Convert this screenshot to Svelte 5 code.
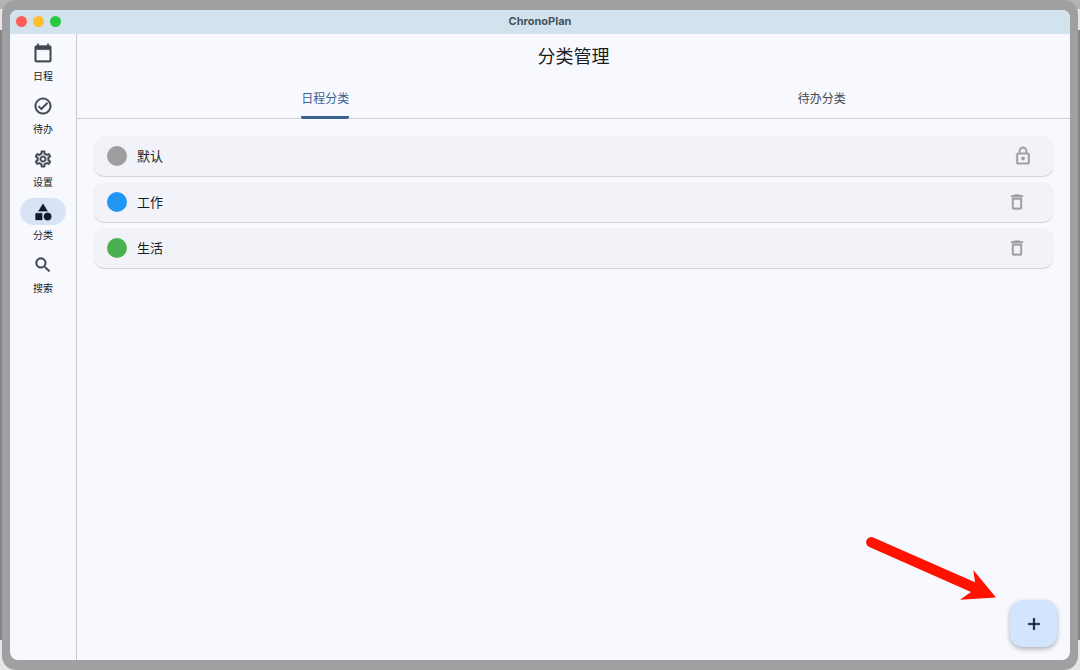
<script>
  const nav = [
    { label: '日程', icon: 'M20 3h-1V1h-2v2H7V1H5v2H4c-1.1 0-2 .9-2 2v16c0 1.1.9 2 2 2h16c1.1 0 2-.9 2-2V5c0-1.1-.9-2-2-2zm0 18H4V8h16v13z' },
    { label: '待办', icon: 'M12 2C6.48 2 2 6.48 2 12s4.48 10 10 10 10-4.48 10-10S17.52 2 12 2zm0 18c-4.41 0-8-3.59-8-8s3.59-8 8-8 8 3.59 8 8-3.59 8-8 8zm4.59-12.42L10 14.17l-2.59-2.58L6 13l4 4 8-8z' },
    { label: '设置', icon: 'M19.43 12.98c.04-.32.07-.64.07-.98 0-.34-.03-.66-.07-.98l2.11-1.65c.19-.15.24-.42.12-.64l-2-3.46c-.09-.16-.26-.25-.44-.25-.06 0-.12.01-.17.03l-2.49 1c-.52-.4-1.08-.73-1.69-.98l-.38-2.65C14.46 2.18 14.25 2 14 2h-4c-.25 0-.46.18-.49.42l-.38 2.65c-.61.25-1.17.59-1.69.98l-2.49-1c-.06-.02-.12-.03-.18-.03-.17 0-.34.09-.43.25l-2 3.46c-.13.22-.07.49.12.64l2.11 1.65c-.04.32-.07.65-.07.98 0 .33.03.66.07.98l-2.11 1.65c-.19.15-.24.42-.12.64l2 3.46c.09.16.26.25.44.25.06 0 .12-.01.17-.03l2.49-1c.52.4 1.08.73 1.69.98l.38 2.65c.03.24.24.42.49.42h4c.25 0 .46-.18.49-.42l.38-2.65c.61-.25 1.17-.59 1.69-.98l2.49 1c.06.02.12.03.18.03.17 0 .34-.09.43-.25l2-3.46c.12-.22.07-.49-.12-.64l-2.11-1.65zm-1.98-1.71c.04.31.05.52.05.73 0 .21-.02.43-.05.73l-.14 1.13.89.7 1.08.84-.7 1.21-1.27-.51-1.04-.42-.9.68c-.43.32-.84.56-1.25.73l-1.06.43-.16 1.13-.2 1.35h-1.4l-.19-1.35-.16-1.13-1.06-.43c-.43-.18-.83-.41-1.23-.71l-.91-.7-1.06.43-1.27.51-.7-1.21 1.08-.84.89-.7-.14-1.13c-.03-.31-.05-.54-.05-.74s.02-.43.05-.73l.14-1.13-.89-.7-1.08-.84.7-1.21 1.27.51 1.04.42.9-.68c.43-.32.84-.56 1.25-.73l1.06-.43.16-1.13.2-1.35h1.39l.19 1.35.16 1.13 1.06.43c.43.18.83.41 1.23.71l.91.7 1.06-.43 1.27-.51.7 1.21-1.07.85-.89.7.14 1.13zM12 8c-2.21 0-4 1.79-4 4s1.79 4 4 4 4-1.79 4-4-1.79-4-4-4zm0 6c-1.1 0-2-.9-2-2s.9-2 2-2 2 .9 2 2-.9 2-2 2z' },
    { label: '分类', icon: 'M12 2l-5.5 9h11zM17.500 13a4.500 4.500 0 1 0 0 9a4.500 4.500 0 1 0 0-9zM3 13.500h8v8H3z', active: true },
    { label: '搜索', icon: 'M15.500 14h-.79l-.28-.27C15.410 12.590 16 11.110 16 9.500 16 5.910 13.090 3 9.500 3S3 5.910 3 9.500 5.910 16 9.500 16c1.610 0 3.090-.59 4.230-1.570l.27.28v.79l5 4.990L20.490 19l-4.990-5zm-6 0C7.010 14 5 11.990 5 9.500S7.010 5 9.500 5 14 7.010 14 9.500 11.990 14 9.500 14z' }
  ];
  const categories = [
    { name: '默认', color: '#9e9e9e', locked: true },
    { name: '工作', color: '#2196f3' },
    { name: '生活', color: '#4caf50' }
  ];
  const tabs = ['日程分类', '待办分类'];
</script>

<div class="desktop">
  <div class="frame">
    <div class="window">
      <header class="titlebar">
        <div class="lights">
          <button class="light close" aria-label="关闭"></button>
          <button class="light minimize" aria-label="最小化"></button>
          <button class="light zoom" aria-label="缩放"></button>
        </div>
        <span class="app-name">ChronoPlan</span>
      </header>

      <div class="body">
        <nav>
          {#each nav as item}
            <button class="nav-item" class:active={item.active} aria-current={item.active ? 'page' : undefined}>
              <span class="pill"><svg viewBox="0 0 24 24" width="20" height="20" aria-hidden="true"><path d={item.icon} /></svg></span>
              <span class="nav-label">{item.label}</span>
            </button>
          {/each}
        </nav>

        <main>
          <h1>分类管理</h1>
          <div class="tabs" role="tablist">
            {#each tabs as tab, i}
              <button class="tab" class:selected={i === 0} role="tab" aria-selected={i === 0}><span>{tab}</span></button>
            {/each}
          </div>
          <ul>
            {#each categories as category}
              <li>
                <span class="dot" style="background: {category.color}"></span>
                <span class="name">{category.name}</span>
                {#if category.locked}
                  <svg class="lock" viewBox="0 0 24 24" width="20" height="20" aria-hidden="true"><path d="M12 17c1.100 0 2-.9 2-2s-.9-2-2-2-2 .9-2 2 .9 2 2 2zm6-9h-1V6c0-2.760-2.240-5-5-5S7 3.240 7 6v2H6c-1.100 0-2 .9-2 2v10c0 1.100.9 2 2 2h12c1.100 0 2-.9 2-2V10c0-1.100-.9-2-2-2zM8.900 6c0-1.710 1.390-3.100 3.100-3.100s3.100 1.390 3.100 3.100v2H8.900V6zM18 20H6V10h12v10z" /></svg>
                {:else}
                  <button class="delete" aria-label="删除{category.name}">
                    <svg viewBox="0 0 24 24" width="20" height="20" aria-hidden="true"><path d="M6 19c0 1.100.9 2 2 2h8c1.100 0 2-.9 2-2V7H6v12zM8 9h8v10H8V9zm7.500-5l-1-1h-5l-1 1H5v2h14V4z" /></svg>
                  </button>
                {/if}
              </li>
            {/each}
          </ul>
          <svg class="arrow" viewBox="0 0 132 66" width="132" height="66" aria-hidden="true">
            <path d="M8.300 3.500L110 48.300L108.300 36L131 63.500L95 65.700L106 58L4.300 13A5 5 0 0 1 8.300 3.500Z" />
          </svg>
          <button class="fab" aria-label="新建分类">
            <svg viewBox="0 0 24 24" width="20" height="20" aria-hidden="true"><path d="M19 13h-6v6h-2v-6H5v-2h6V5h2v6h6v2z" /></svg>
          </button>
        </main>
      </div>
    </div>
  </div>
</div>

<style>
  :global(body) { margin: 0; }
  * { box-sizing: border-box; }
  button { border: 0; padding: 0; background: none; color: inherit; font: inherit; }
  svg { display: block; fill: currentColor; }
  nav svg, li svg, .fab svg { stroke: currentColor; stroke-width: 0.4; }
  .desktop {
    display: flex;
    min-height: 100vh;
    padding: 0 2px;
    background: linear-gradient(#b4b4b4 9px, #e6e6e6 9px 30px, #858585 30px calc(100% - 30px), #e6e6e6 calc(100% - 30px));
    font-family: Roboto, "Noto Sans CJK SC", sans-serif;
    color: #191c20;
  }
  .frame {
    flex: 1;
    display: flex;
    padding: 10px 8px;
    border-radius: 14px;
    background: #a0a0a2;
  }
  .window {
    flex: 1;
    display: flex;
    flex-direction: column;
    overflow: hidden;
    border-radius: 8px;
    background: #f8f9ff;
  }
  .titlebar {
    display: grid;
    grid-template-columns: 1fr auto 1fr;
    align-items: center;
    height: 24px;
    padding: 0 6px 2px;
    background: #d3e3ee;
  }
  .lights { display: flex; gap: 6px; }
  .light { width: 11px; height: 11px; border-radius: 50%; }
  .close { background: #ff5f57; }
  .minimize { background: #febc2e; }
  .zoom { background: #28c840; }
  .app-name { font: 700 11px/14px Inter, sans-serif; color: #46525c; }
  .body { flex: 1; display: flex; }
  nav {
    display: flex;
    flex-direction: column;
    gap: 6px;
    width: 67px;
    padding-top: 5px;
    border-right: 1px solid #c6c8ce;
  }
  .nav-item { display: flex; flex-direction: column; align-items: center; gap: 2px; color: #43474e; }
  .pill { display: grid; place-items: center; width: 46px; height: 27px; border-radius: 14px; }
  .active .pill { background: #d8e4f5; color: #101c2b; }
  .nav-label { height: 18px; font-size: 10px; line-height: 17px; color: #191c20; }
  main { position: relative; flex: 1; }
  h1 { margin: 0; font-size: 18px; line-height: 46px; font-weight: 400; text-align: center; }
  .tabs { display: flex; height: 39px; border-bottom: 1px solid #cfd1d7; }
  .tab { flex: 1; display: flex; justify-content: center; font-size: 12px; line-height: 38px; color: #43474e; }
  .tab span { height: 39px; }
  .selected { position: relative; color: #3a608f; }
  .selected span { background: linear-gradient(#3a608f, #3a608f) bottom / 100% 3px no-repeat; border-radius: 2px; }
  ul { display: flex; flex-direction: column; gap: 6px; margin: 0; padding: 17px 17px 0; list-style: none; }
  li {
    display: flex;
    align-items: center;
    gap: 10px;
    height: 40px;
    padding: 0 20px 0 13px;
    border-radius: 10px;
    background: #f2f3f9;
    box-shadow: 0 1px 1px rgba(0, 0, 0, 0.16);
  }
  .dot { width: 20px; height: 20px; border-radius: 50%; }
  .name { flex: 1; padding-top: 2px; font-size: 13px; line-height: 20px; }
  .lock, .delete { color: #9e9e9e; }
  .delete { margin-right: 6px; }
  .arrow { position: absolute; right: 73px; bottom: 60px; fill: #ff1200; }
  .fab {
    position: absolute;
    right: 13px;
    bottom: 13px;
    display: grid;
    place-items: center;
    width: 47px;
    height: 47px;
    border-radius: 13px;
    background: #d3e4ff;
    color: #001c38;
    box-shadow: 0 2px 5px rgba(0, 0, 0, 0.3);
  }
</style>
